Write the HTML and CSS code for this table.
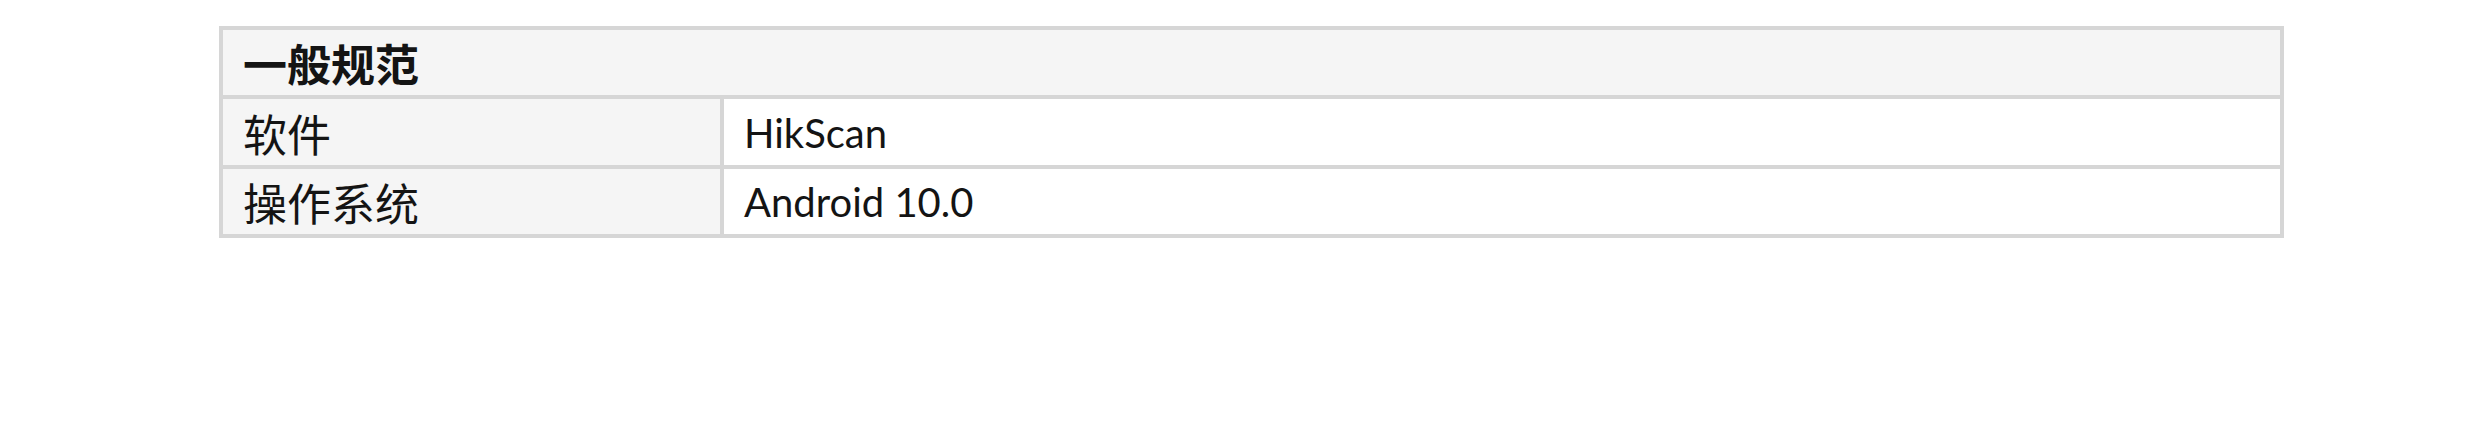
FILE: index.html
```html
<!DOCTYPE html>
<html lang="zh-CN">
<head>
<meta charset="utf-8">
<title>一般规范</title>
<link rel="stylesheet" href="styles.css">
</head>
<body>
<table class="spec">
  <tr class="spec-head">
    <th colspan="2">一般规范</th>
  </tr>
  <tr class="mid">
    <td class="label">软件</td>
    <td class="value">HikScan</td>
  </tr>
  <tr class="last">
    <td class="label">操作系统</td>
    <td class="value">Android 10.0</td>
  </tr>
</table>
</body>
</html>
```

FILE: styles.css
```css
html, body {
  margin: 0;
  padding: 0;
  background: #ffffff;
}

body {
  padding: 26px 0 0 219px;
  font-family: Lato, "Noto Sans CJK SC", sans-serif;
  color: #141414;
}

.spec {
  border-collapse: collapse;
  width: 2065px;
  border: 4px solid #d6d6d6;
}

.spec th,
.spec td {
  border: 4px solid #d6d6d6;
  padding: 2px 20px 0;
  text-align: left;
  vertical-align: middle;
  height: 63px;
  line-height: 63px;
}

.spec th {
  background: #f5f5f5;
  font-family: "Noto Sans CJK SC", sans-serif;
  font-weight: 700;
  font-size: 44px;
}

.spec .label {
  width: 457px;
  background: #f5f5f5;
  font-family: "Noto Sans CJK SC", sans-serif;
  font-size: 44px;
  font-weight: 400;
}

.spec .value {
  background: #ffffff;
  font-family: Lato, sans-serif;
  font-size: 40px;
}

.spec .mid td {
  height: 64px;
  line-height: 64px;
}

.spec .last td {
  height: 63px;
  line-height: 63px;
}
```
